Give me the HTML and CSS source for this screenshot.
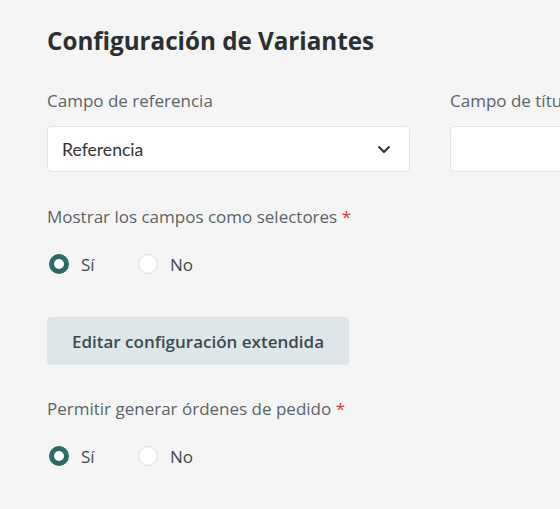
FILE: index.html
```html
<!DOCTYPE html>
<html lang="es">
<head>
  <meta charset="UTF-8" />
  <title>Configuración de Variantes</title>
  <link rel="stylesheet" href="styles.css">
</head>
<body>
  <div class="panel">
    <h2>Configuración de Variantes</h2>

    <div class="row">
      <div class="field">
        <label>Campo de referencia</label>
        <div class="select">
          <span>Referencia</span>
          <svg width="14" height="9" viewBox="0 0 14 9"><path d="M1.5 1.5 L7 7 L12.5 1.5" fill="none" stroke="#333" stroke-width="2"/></svg>
        </div>
      </div>
      <div class="field">
        <label>Campo de título</label>
        <div class="select"></div>
      </div>
    </div>

    <div class="group">
      <label>Mostrar los campos como selectores <span class="req">*</span></label>
      <div class="radios">
        <span class="radio checked"></span><span class="opt">Sí</span>
        <span class="radio"></span><span class="opt">No</span>
      </div>
    </div>

    <button type="button" class="btn">Editar configuración extendida</button>

    <div class="group">
      <label>Permitir generar órdenes de pedido <span class="req">*</span></label>
      <div class="radios">
        <span class="radio checked"></span><span class="opt">Sí</span>
        <span class="radio"></span><span class="opt">No</span>
      </div>
    </div>
  </div>
</body>
</html>
```

FILE: styles.css
```css
body {
  margin: 0;
  background-color: #f5f5f5;
  font-family: 'Open Sans', sans-serif;
  overflow: hidden;
}
.panel {
  padding: 24px 0 0 47px;
  width: 900px;
}
h2 {
  margin: 0 0 31px 0;
  font-size: 24.2px;
  font-weight: 700;
  color: #2a2f31;
  line-height: 34px;
}
label {
  display: block;
  font-size: 17px;
  color: #5a6366;
  line-height: 24px;
  margin-bottom: 13px;
  white-space: nowrap;
}
.row {
  display: flex;
  gap: 40px;
}
.field {
  width: 363px;
}
.select {
  height: 46px;
  box-sizing: border-box;
  background: white;
  border: 1px solid #e3e3e3;
  border-radius: 4px;
  display: flex;
  align-items: center;
  justify-content: space-between;
  padding: 0 18px 0 14px;
  font-family: 'Lato', sans-serif;
  font-size: 17.6px;
  color: #333;
}
.group {
  margin-top: 33px;
}
.group label {
  margin-bottom: 23px;
}
.req {
  color: #d23c3c;
}
.radios {
  display: flex;
  align-items: center;
  height: 24px;
}
.radio {
  width: 20px;
  height: 20px;
  box-sizing: border-box;
  border-radius: 50%;
  background: white;
  border: 1px solid #dcdcdc;
  margin-left: 2px;
}
.radio.checked {
  border: 5px solid #2b6b64;
}
.opt {
  font-size: 17px;
  color: #3f4a4d;
  margin-left: 12px;
  width: 55px;
}
.btn {
  display: block;
  margin-top: 41px;
  width: 302px;
  height: 48px;
  background-color: #dfe6e9;
  color: #3a4b50;
  border: none;
  border-radius: 4px;
  font-family: 'Open Sans', sans-serif;
  font-size: 17px;
  font-weight: 600;
  cursor: pointer;
}
.btn + .group {
  margin-top: 32px;
}
```
